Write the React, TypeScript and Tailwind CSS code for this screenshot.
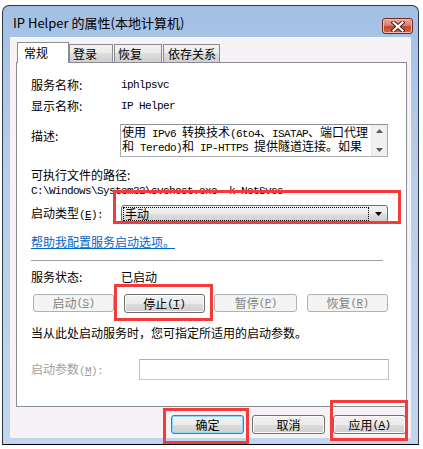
import React from "react";

function M({ children }: { children: React.ReactNode }) {
  return (
    <span className="font-['Liberation_Mono',monospace] text-[11px] tracking-[-0.6px]">
      {children}
    </span>
  );
}

function Btn({
  children,
  disabled,
  isDefault,
  w = "w-[81px]",
}: {
  children: React.ReactNode;
  disabled?: boolean;
  isDefault?: boolean;
  w?: string;
}) {
  if (disabled) {
    return (
      <div
        className={`${w} h-[18px] rounded-[3px] border border-[#adb2b5] bg-[#f4f4f4] text-[#838383] flex items-center justify-center leading-[14px]`}
      >
        {children}
      </div>
    );
  }
  return (
    <div
      className={`${w} h-[19px] rounded-[3px] border ${
        isDefault
          ? "border-[#3c7fb1] shadow-[inset_0_0_0_1px_#8fd8f8]"
          : "border-[#707070] shadow-[inset_0_0_0_1px_#fbfbfb]"
      } bg-[linear-gradient(#f2f2f2_0%,#ebebeb_50%,#dddddd_50%,#cfcfcf_100%)] text-black flex items-center justify-center leading-[14px]`}
    >
      {children}
    </div>
  );
}

function Tab({
  label,
  selected,
  w,
  pl,
}: {
  label: string;
  selected?: boolean;
  w: string;
  pl: string;
}) {
  if (selected) {
    return (
      <div
        className={`${w} ${pl} h-[21px] -mb-px relative z-10 border border-b-0 border-[#898c95] bg-white pt-[3px] leading-[14px]`}
      >
        {label}
      </div>
    );
  }
  return (
    <div
      className={`${w} ${pl} h-[18px] border border-b-0 border-[#898c95] bg-[linear-gradient(#f2f2f2_0%,#ebebeb_50%,#dddddd_50%,#cfcfcf_100%)] pt-[2px] leading-[14px]`}
    >
      {label}
    </div>
  );
}

function RedBox({ cls }: { cls: string }) {
  return <div className={`absolute border-[3px] border-[#f53a3a] ${cls}`} />;
}

export default function App() {
  return (
    <div className="relative w-[423px] h-[449px] overflow-hidden bg-white pl-[2px] pt-[5px] font-['Noto_Sans_CJK_SC',sans-serif] text-[12px] text-black">
      {/* window */}
      <div className="w-[417px] h-[440px] rounded-t-[7px] border border-[#2f3a46] border-b-black bg-[linear-gradient(#a3c0e4_0%,#b7cfeb_40%,#c1d6ee_100%)] flex flex-col overflow-hidden">
        {/* title bar */}
        <div className="h-[31px] flex items-start justify-between">
          <div className="pl-[10px] pt-[9px] text-[13px] leading-[16px]">
            IP Helper 的属性(本地计算机)
          </div>
          <div className="mt-[12px] mr-[5px] w-[31px] h-[16px] rounded-[3px] border border-[#6e2a1f] bg-[linear-gradient(#e9a99a_0%,#d7826e_45%,#c2452d_55%,#d0694f_100%)] shadow-[inset_0_0_0_1px_#efb9ad] flex items-center justify-center">
            <svg width="14" height="11" viewBox="0 0 14 11">
              <path d="M2.5 1.5 L11.5 9.5 M11.5 1.5 L2.5 9.5" stroke="#4a1a12" strokeWidth="4" strokeLinecap="square" />
              <path d="M2.5 1.5 L11.5 9.5 M11.5 1.5 L2.5 9.5" stroke="#ffffff" strokeWidth="2.2" strokeLinecap="square" />
            </svg>
          </div>
        </div>

        {/* client area */}
        <div className="ml-[7px] w-[401px] h-[401px] bg-[#f6f2f6] flex flex-col">
          {/* tabs */}
          <div className="pl-[7px] pt-[5px] h-[25px] flex items-end">
            <Tab label="常规" selected w="w-[52px]" pl="pl-[6px]" />
            <Tab label="登录" w="w-[44px]" pl="pl-[3px]" />
            <div className="w-[1px]" />
            <Tab label="恢复" w="w-[48px]" pl="pl-[3px]" />
            <div className="w-[1px]" />
            <Tab label="依存关系" w="w-[57px]" pl="pl-[4px]" />
          </div>

          {/* panel */}
          <div className="ml-[6px] w-[391px] border border-[#898c95] bg-white pl-[14px] pt-[12px] pb-[26px] flex flex-col">
            <div className="h-[20px] flex items-center">
              <div className="w-[90px]">服务名称:</div>
              <M>iphlpsvc</M>
            </div>
            <div className="mt-[1px] h-[20px] flex items-center">
              <div className="w-[90px]">显示名称:</div>
              <M>IP Helper</M>
            </div>
            <div className="mt-[8px] h-[33px] flex items-start">
              <div className="w-[89px] pt-[5px] leading-[14px]">描述:</div>
              <div className="w-[268px] h-[33px] border border-[#abadb3] border-t-[#8e8f8f] flex">
                <div className="flex-1 pl-[1px] pt-[1px] leading-[12px] whitespace-nowrap">
                  <div>
                    使用<M> IPv6 </M>转换技术<M>(6to4</M>、<M>ISATAP</M>、端口代理
                  </div>
                  <div>
                    和<M> Teredo)</M>和<M> IP-HTTPS </M>提供隧道连接。如果
                  </div>
                </div>
                <div className="w-[16px] bg-[#f0f0f0] border-l border-[#e6e6e6] flex flex-col items-center justify-between py-[4px]">
                  <svg width="7" height="4" viewBox="0 0 7 4">
                    <path d="M0 4 L3.5 0 L7 4 Z" fill="#5a5a5a" />
                  </svg>
                  <svg width="7" height="4" viewBox="0 0 7 4">
                    <path d="M0 0 L3.5 4 L7 0 Z" fill="#5a5a5a" />
                  </svg>
                </div>
              </div>
            </div>
            <div className="mt-[11px] h-[14px] leading-[14px]">可执行文件的路径:</div>
            <div className="h-[13px] leading-[13px]">
              <M>C:\Windows\System32\svchost.exe -k NetSvcs</M>
            </div>
            <div className="mt-[10px] h-[18px] flex items-center">
              <div className="w-[90px]">
                启动类型<M>(<u>E</u>):</M>
              </div>
              <div className="w-[267px] h-[18px] rounded-[3px] border border-[#707070] bg-[linear-gradient(#f2f2f2_0%,#ebebeb_50%,#dddddd_50%,#cfcfcf_100%)] flex items-center pl-[1px]">
                <div className="w-[246px] h-[14px] border border-dotted border-black pl-[1px] leading-[12px]">
                  手动
                </div>
                <div className="flex-1 flex justify-center">
                  <svg width="7" height="4" viewBox="0 0 7 4">
                    <path d="M0 0 L3.5 4 L7 0 Z" fill="#000" />
                  </svg>
                </div>
              </div>
            </div>
            <div className="mt-[12px] h-[14px] leading-[14px] text-[#0066cc] underline">
              帮助我配置服务启动选项。
            </div>
            <div className="mt-[11px] w-[352px] h-px bg-[#a0a0a0]" />
            <div className="mt-[9px] h-[14px] leading-[14px] flex">
              <div className="w-[90px]">服务状态:</div>
              <div>已启动</div>
            </div>
            <div className="mt-[10px] ml-[2px] w-[355px] flex justify-between">
              <Btn disabled>
                启动<M>(<u>S</u>)</M>
              </Btn>
              <Btn>
                停止<M> (<u>T</u>)</M>
              </Btn>
              <Btn disabled w="w-[83px]">
                暂停<M>(<u>P</u>)</M>
              </Btn>
              <Btn disabled>
                恢复<M>(<u>R</u>)</M>
              </Btn>
            </div>
            <div className="mt-[13px] h-[14px] leading-[14px]">
              当从此处启动服务时，您可指定所适用的启动参数。
            </div>
            <div className="mt-[19px] h-[21px] flex items-center">
              <div className="w-[108px] text-[#a0a0a0]">
                启动参数<M>(<u>M</u>):</M>
              </div>
              <div className="w-[250px] h-[21px] border border-[#c4c6cc] border-t-[#abadb3] bg-white" />
            </div>
          </div>

          {/* dialog buttons */}
          <div className="mt-[8px] pr-[5px] flex justify-end gap-[8px]">
            <Btn isDefault w="w-[73px]">
              确定
            </Btn>
            <Btn w="w-[73px]">取消</Btn>
            <Btn w="w-[73px]">
              应用<M> (<u>A</u>)</M>
            </Btn>
          </div>
        </div>
      </div>

      {/* highlight boxes */}
      <RedBox cls="left-[113px] top-[190px] w-[288px] h-[34px]" />
      <RedBox cls="left-[114px] top-[284px] w-[99px] h-[37px]" />
      <RedBox cls="left-[163px] top-[408px] w-[86px] h-[36px]" />
      <RedBox cls="left-[330px] top-[400px] w-[78px] h-[41px]" />
    </div>
  );
}
